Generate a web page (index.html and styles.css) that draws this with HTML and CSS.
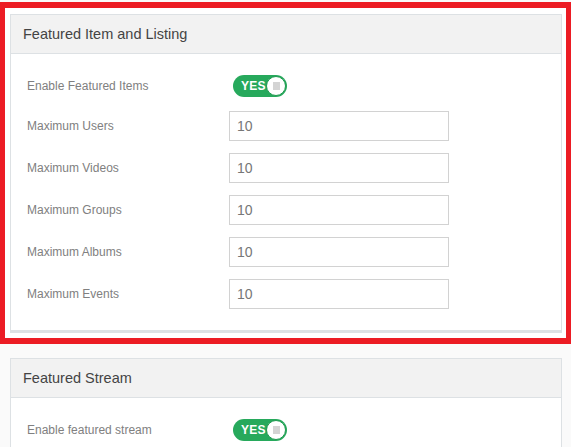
FILE: index.html
```html
<!DOCTYPE html>
<html>
<head>
<meta charset="utf-8">
<link rel="stylesheet" href="styles.css">
</head>
<body>
<div class="highlight">
  <section class="panel">
    <div class="panel-head">Featured Item and Listing</div>
    <div class="panel-body">
      <div class="row row-toggle">
        <label class="label">Enable Featured Items</label>
        <span class="toggle"><span class="toggle-text">YES</span><span class="knob"><span class="knob-mark"></span></span></span>
      </div>
      <div class="row"><label class="label">Maximum Users</label><input class="field" type="text" value="10"></div>
      <div class="row"><label class="label">Maximum Videos</label><input class="field" type="text" value="10"></div>
      <div class="row"><label class="label">Maximum Groups</label><input class="field" type="text" value="10"></div>
      <div class="row"><label class="label">Maximum Albums</label><input class="field" type="text" value="10"></div>
      <div class="row"><label class="label">Maximum Events</label><input class="field" type="text" value="10"></div>
    </div>
  </section>
</div>
<section class="panel panel-second">
  <div class="panel-head">Featured Stream</div>
  <div class="panel-body">
    <div class="row row-toggle">
      <label class="label">Enable featured stream</label>
      <span class="toggle"><span class="toggle-text">YES</span><span class="knob"><span class="knob-mark"></span></span></span>
    </div>
  </div>
</section>
</body>
</html>
```
FILE: styles.css
```css
html, body {
  margin: 0;
  padding: 0;
}
body {
  background: #fafafa;
  font-family: "Liberation Sans", Arial, sans-serif;
  overflow: hidden;
}
.highlight {
  margin: 2px -1px 0 -1px;
  border: 6px solid #ec1c24;
  background: #fff;
  padding: 6px 4px 5px 5px;
}
.panel {
  background: #fff;
  border: 1px solid #dde1e4;
  border-bottom: 3px solid #dde1e4;
}
.panel-second {
  margin: 14px 9px 0 10px;
}
.panel-head {
  background: #f2f2f2;
  border-bottom: 1px solid #dde1e4;
  height: 38px;
  line-height: 38px;
  padding: 0 12px;
  font-size: 14.5px;
  color: #444;
}
.panel-body {
  padding: 18px 16px 9px 16px;
}
.row {
  display: flex;
  align-items: center;
  height: 30px;
  margin-bottom: 12px;
}
.row-toggle {
  height: 27px;
}
.label {
  width: 202px;
  flex: none;
  font-size: 12px;
  color: #808080;
}
.field {
  box-sizing: border-box;
  width: 220px;
  height: 30px;
  border: 1px solid #d2d2d2;
  padding: 0 7px;
  font-family: "Liberation Sans", Arial, sans-serif;
  font-size: 14px;
  color: #777;
  background: #fff;
  outline: none;
  margin: 0;
}
.toggle {
  margin-left: 4px;
  display: flex;
  align-items: center;
  box-sizing: border-box;
  width: 54px;
  height: 22px;
  border-radius: 11px;
  background: #27a95c;
  padding: 0 1px 0 8px;
  justify-content: space-between;
}
.toggle-text {
  color: #fff;
  font-weight: bold;
  font-size: 12px;
  letter-spacing: 0.2px;
}
.knob {
  box-sizing: border-box;
  width: 20px;
  height: 20px;
  border-radius: 50%;
  background: #fff;
  border: 1px solid #1f9a50;
  display: flex;
  align-items: center;
  justify-content: center;
}
.knob-mark {
  width: 7px;
  height: 8px;
  background: #d4d4d4;
}
```
